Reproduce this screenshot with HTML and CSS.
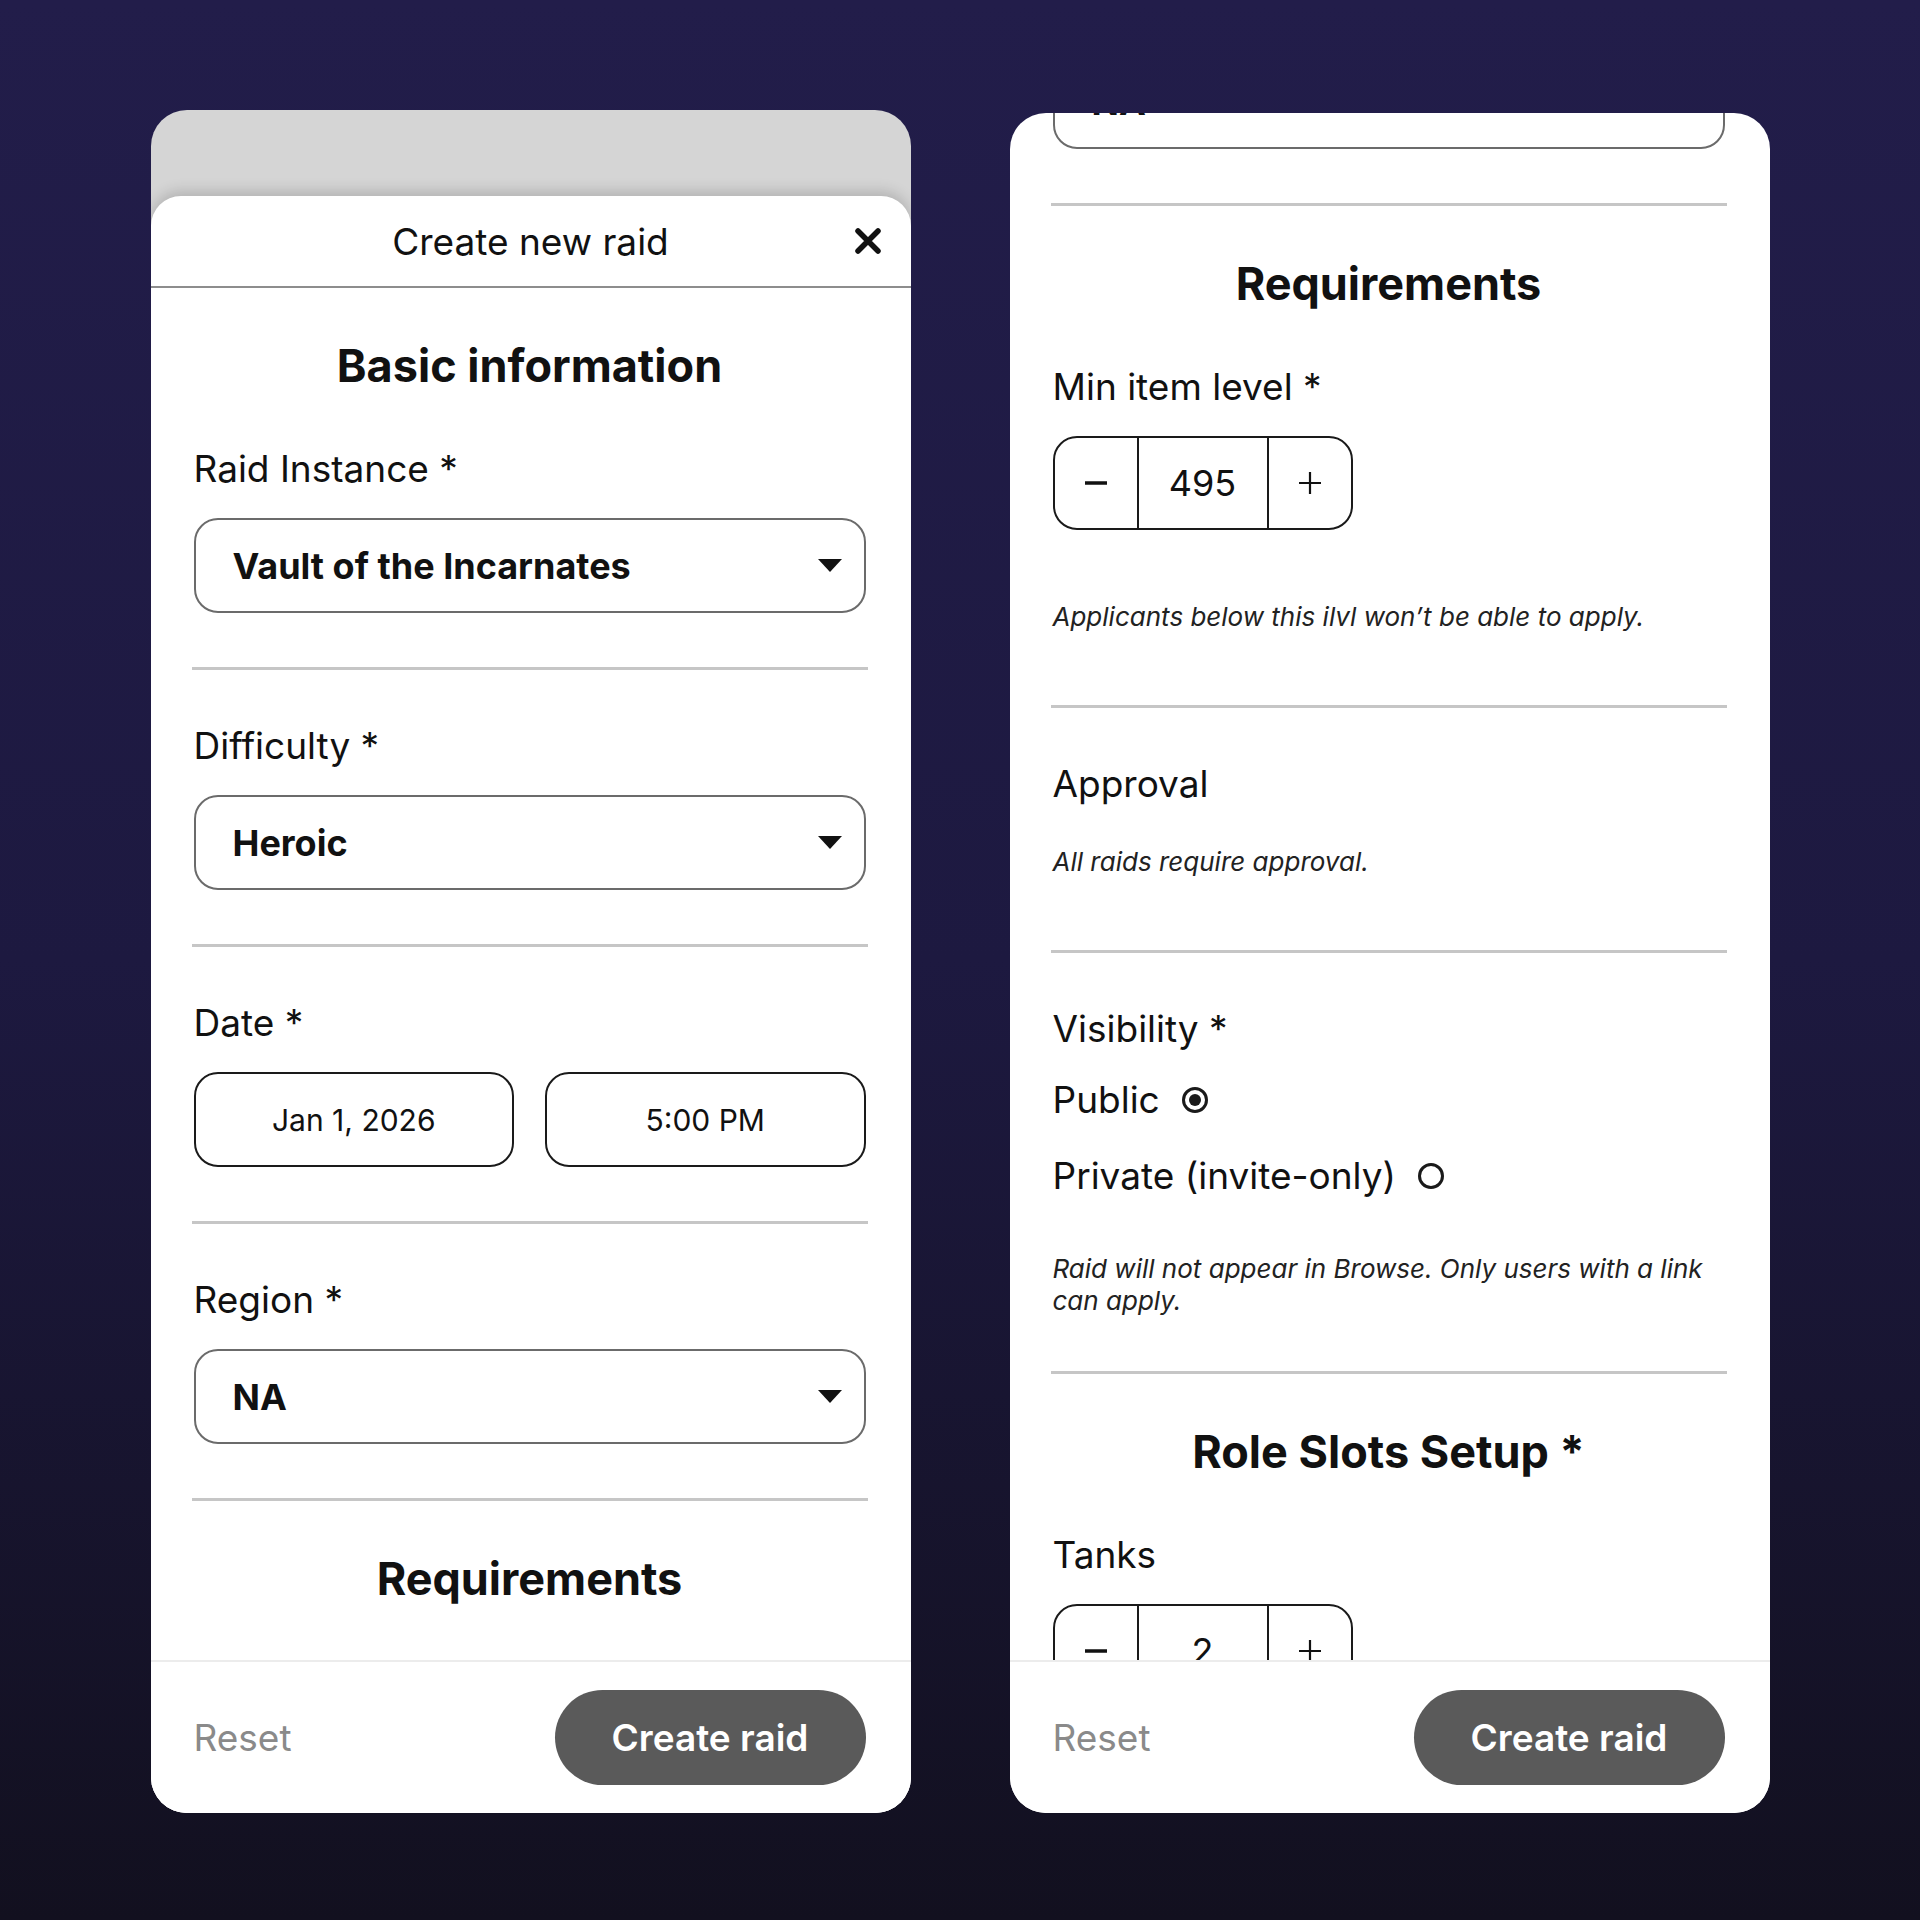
FILE: index.html
```html
<!DOCTYPE html>
<html lang="en">
<head>
    <meta charset="UTF-8">
    <title>Create new raid</title>
    <link rel="stylesheet" href="styles.css">
</head>
<body>
<div class="stage">

    <!-- modal opened, top of the form -->
    <div class="phone phone--modal">
        <div class="backdrop"></div>
        <div class="sheet">
            <header class="sheet-head">
                <span></span>
                <h1>Create new raid</h1>
                <button class="close" aria-label="Close">
                    <svg width="30" height="30" viewBox="0 0 30 30"><path d="M5 5L25 25M25 5L5 25" stroke="#111" stroke-width="5.5" stroke-linecap="round"/></svg>
                </button>
            </header>
            <div class="sheet-body">
                <h2 class="section-title">Basic information</h2>
                <div class="field">
                    <label class="field-label">Raid Instance *</label>
                    <div class="select"><span>Vault of the Incarnates</span><i class="caret"></i></div>
                </div>
                <hr class="rule">
                <div class="field">
                    <label class="field-label">Difficulty *</label>
                    <div class="select"><span>Heroic</span><i class="caret"></i></div>
                </div>
                <hr class="rule">
                <div class="field">
                    <label class="field-label">Date *</label>
                    <div class="date-row">
                        <div class="date-box">Jan 1, 2026</div>
                        <div class="date-box">5:00 PM</div>
                    </div>
                </div>
                <hr class="rule">
                <div class="field">
                    <label class="field-label">Region *</label>
                    <div class="select"><span>NA</span><i class="caret"></i></div>
                </div>
                <hr class="rule">
                <h2 class="section-title">Requirements</h2>
            </div>
            <footer class="sheet-foot">
                <button class="btn-reset">Reset</button>
                <button class="btn-create">Create raid</button>
            </footer>
        </div>
    </div>

    <!-- same modal scrolled down -->
    <div class="phone phone--scrolled">
        <div class="sheet">
            <div class="sheet-body">
                <div class="scroll-offset">
                    <div class="field">
                        <label class="field-label">Region *</label>
                        <div class="select"><span>NA</span><i class="caret"></i></div>
                    </div>
                    <hr class="rule">
                    <h2 class="section-title">Requirements</h2>
                    <div class="field">
                        <label class="field-label">Min item level *</label>
                        <div class="stepper">
                            <button class="step"><svg width="24" height="24" viewBox="0 0 24 24"><path d="M1 12H23" stroke="#111" stroke-width="3.5"/></svg></button>
                            <span class="step-value">495</span>
                            <button class="step"><svg width="26" height="26" viewBox="0 0 26 26"><path d="M13 2V24M2 13H24" stroke="#111" stroke-width="2.2"/></svg></button>
                        </div>
                        <p class="hint hint--after-control">Applicants below this ilvl won’t be able to apply.</p>
                    </div>
                    <hr class="rule">
                    <div class="field">
                        <label class="field-label">Approval</label>
                        <p class="hint hint--after-label">All raids require approval.</p>
                    </div>
                    <hr class="rule">
                    <div class="field">
                        <label class="field-label">Visibility *</label>
                        <div class="radio">Public <i class="radio-dot radio-dot--on"></i></div>
                        <div class="radio">Private (invite-only) <i class="radio-dot"></i></div>
                        <p class="hint hint--multi">Raid will not appear in Browse. Only users with a link can apply.</p>
                    </div>
                    <hr class="rule">
                    <h2 class="section-title">Role Slots Setup *</h2>
                    <div class="field">
                        <label class="field-label">Tanks</label>
                        <div class="stepper">
                            <button class="step"><svg width="24" height="24" viewBox="0 0 24 24"><path d="M1 12H23" stroke="#111" stroke-width="3.5"/></svg></button>
                            <span class="step-value">2</span>
                            <button class="step"><svg width="26" height="26" viewBox="0 0 26 26"><path d="M13 2V24M2 13H24" stroke="#111" stroke-width="2.2"/></svg></button>
                        </div>
                    </div>
                </div>
            </div>
            <footer class="sheet-foot">
                <button class="btn-reset">Reset</button>
                <button class="btn-create">Create raid</button>
            </footer>
        </div>
    </div>

</div>
</body>
</html>
```

FILE: styles.css
```css
* { box-sizing: border-box; }
body { margin: 0; height: 1920px; background: linear-gradient(180deg, #221d4a 0%, #1d1940 50%, #12101f 100%); font-family: Inter, "Noto Sans", sans-serif; color: #111; }
button { font-family: inherit; border: none; background: none; padding: 0; color: inherit; cursor: pointer; }

.stage { display: flex; justify-content: center; align-items: flex-end; gap: 99px; height: 1813px; }

/* phone frames */
.phone { width: 760px; background: #fff; border-radius: 36px; overflow: hidden; display: flex; flex-direction: column; }
.phone--modal { height: 1703px; background: #d5d5d5; }
.phone--scrolled { height: 1700px; }
.backdrop { height: 86px; flex: none; }

.sheet { flex: 1; min-height: 0; display: flex; flex-direction: column; background: #fff; border-radius: 30px 30px 0 0; box-shadow: 0 -5px 14px rgba(0,0,0,.16); }
.phone--scrolled .sheet { border-radius: 0; box-shadow: none; }

.sheet-head { height: 92px; flex: none; display: grid; grid-template-columns: 1fr auto 1fr; align-items: center; border-bottom: 2px solid #8d8d8d; padding: 0 28px; }
.sheet-head h1 { margin: 0; font-size: 37px; font-weight: 400; }
.close { justify-self: end; display: flex; }

.sheet-body { flex: 1 1 0; min-height: 0; overflow: hidden; padding: 0 45px 0 43px; }
.scroll-offset { margin-top: -184px; }

.section-title { margin: 0; padding-top: 51px; font-size: 45px; line-height: 54px; font-weight: 700; text-align: center; }
.rule { height: 3px; margin: 0 -2px; border: 0; background: #c6c6c6; }

/* form fields */
.field { padding: 54px 0; }
.field-label { display: block; font-size: 37px; line-height: 44px; margin-bottom: 27px; }
.select { height: 95px; border: 2px solid #6b6b6b; border-radius: 24px; display: flex; align-items: center; justify-content: space-between; padding: 0 22px 0 37px; font-size: 36px; font-weight: 700; }
.caret { width: 0; height: 0; border-left: 12px solid transparent; border-right: 12px solid transparent; border-top: 13px solid #111; }

.date-row { display: grid; grid-template-columns: 1fr 1fr; gap: 31px; }
.date-box { height: 95px; border: 2px solid #1a1a1a; border-radius: 24px; display: flex; align-items: center; justify-content: center; font-size: 30px; }

.stepper { display: inline-grid; grid-template-columns: 82px 132px 82px; height: 94px; border: 2px solid #1a1a1a; border-radius: 24px; }
.step { display: flex; align-items: center; justify-content: center; }
.step-value { display: flex; align-items: center; justify-content: center; font-size: 36px; border-left: 2px solid #1a1a1a; border-right: 2px solid #1a1a1a; }

.radio { display: flex; align-items: center; gap: 22px; font-size: 37px; line-height: 44px; }
.radio + .radio { margin-top: 32px; }
.radio-dot { width: 26px; height: 26px; border: 3px solid #1a1a1a; border-radius: 50%; display: flex; align-items: center; justify-content: center; }
.radio-dot--on::after { content: ""; width: 12px; height: 12px; border-radius: 50%; background: #1a1a1a; }

.hint { margin: 0; font-size: 26px; line-height: 32px; font-style: italic; color: #222; }
.hint--after-control { margin: 71px 0 18px; }
.hint--after-label { margin: 40px 0 18px; }
.hint--multi { margin-top: 55px; }

/* bottom bar */
.sheet-foot { height: 153px; flex: none; display: flex; align-items: center; justify-content: space-between; padding: 0 45px 0 43px; background: #fff; border-top: 2px solid #ececec; }
.btn-reset { font-size: 37px; color: #8a8a8a; }
.btn-create { width: 311px; height: 95px; border-radius: 48px; background: #5a5a5a; color: #fff; font-size: 37px; font-weight: 600; }
```
